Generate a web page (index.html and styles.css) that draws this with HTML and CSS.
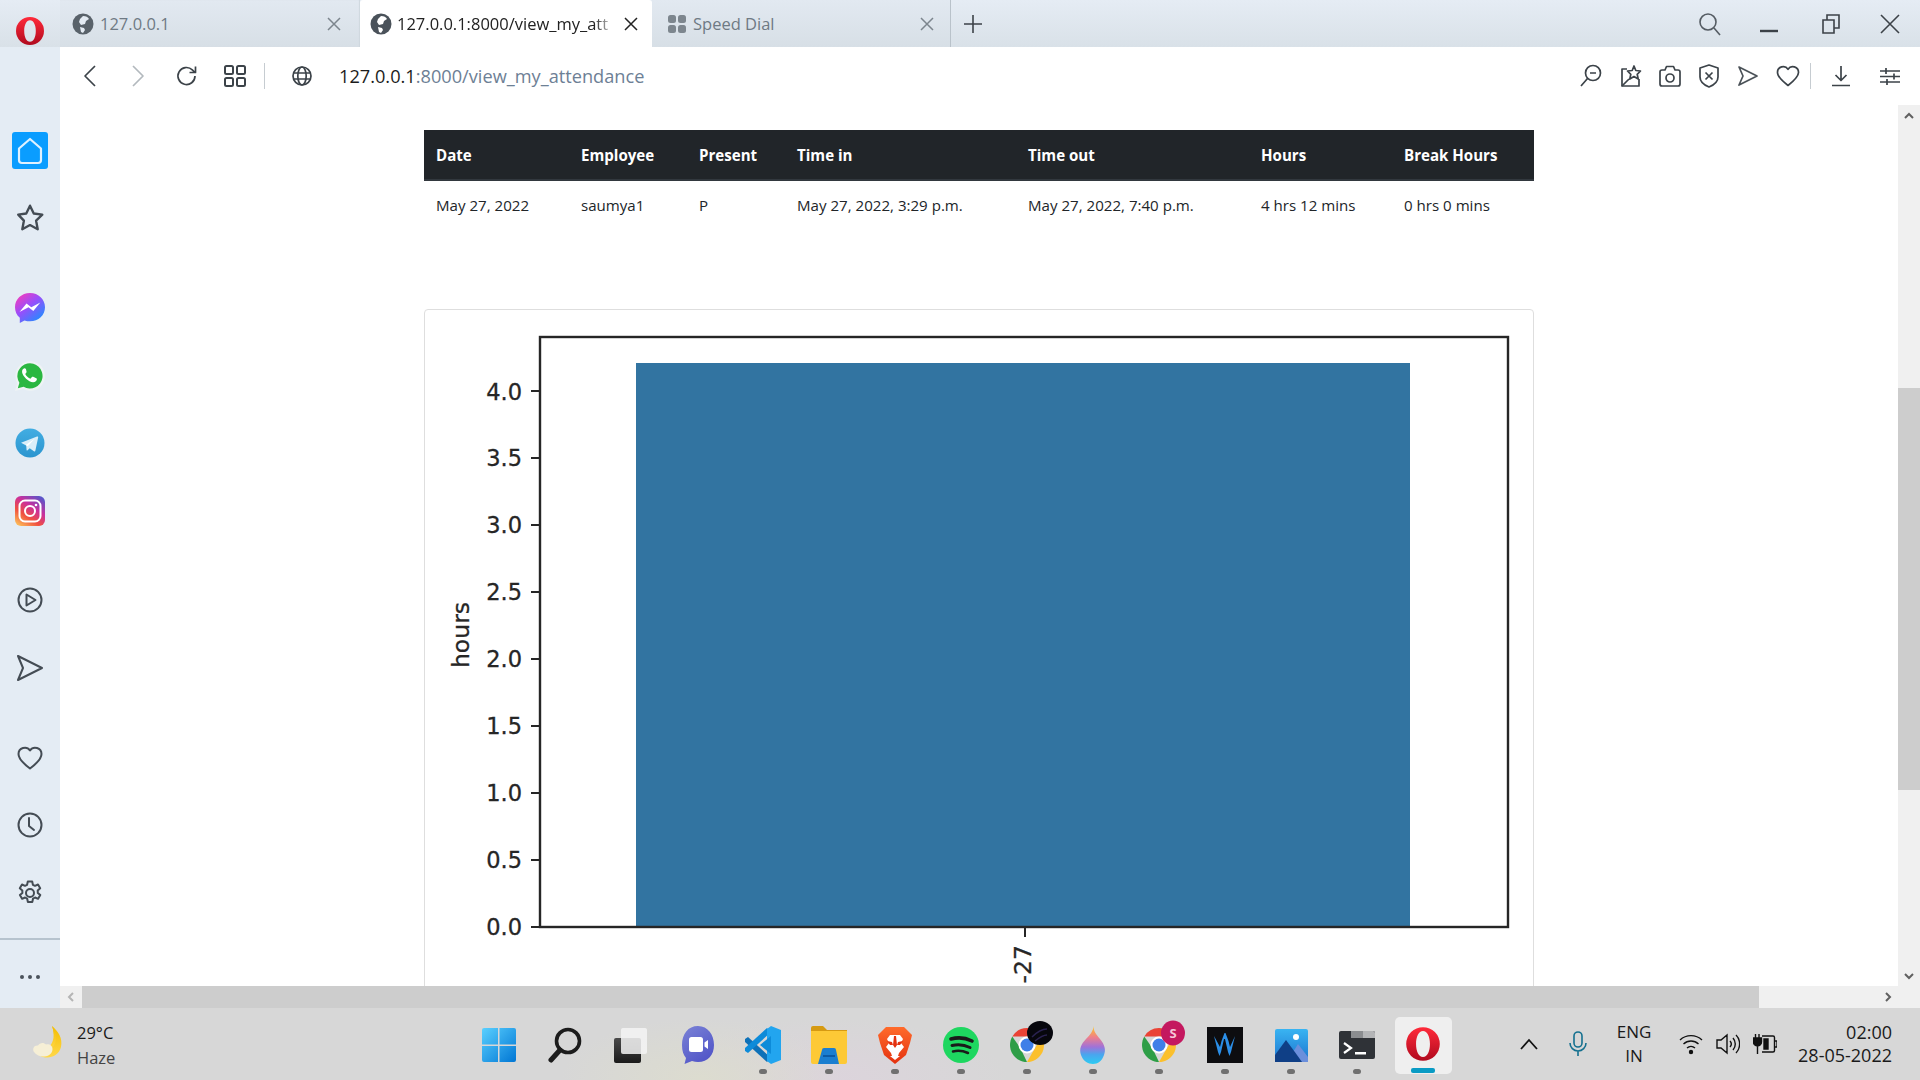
FILE: index.html

```html
<!DOCTYPE html>
<html lang="en">
<head>
    <meta charset="UTF-8">
    <meta name="viewport" content="width=device-width, initial-scale=1.0">
    <title>127.0.0.1:8000/view_my_attendance</title>
    <link rel="stylesheet" href="styles.css">
</head>
<body>

<!-- tab strip -->
<header class="tabbar">
  <div class="logo-slot">
    <svg width="30" height="30" viewBox="0 0 30 30"><defs><linearGradient id="opA" x1="0" y1="0" x2="0" y2="1"><stop offset="0" stop-color="#ff2a3a"/><stop offset="1" stop-color="#b00a1e"/></linearGradient></defs><path fill="url(#opA)" fill-rule="evenodd" d="M15 1a14 14 0 1 0 0 28a14 14 0 1 0 0-28zM15 4.200c-3.600 0-5.800 4.800-5.800 10.800s2.200 10.800 5.800 10.800 5.800-4.800 5.800-10.800-2.200-10.800-5.800-10.800z"/></svg>
  </div>
  <div class="tab tab-one">
    <svg class="favicon" width="22" height="22" viewBox="0 0 22 22"><circle cx="11" cy="11" r="10.500" fill="#59626a"/><path fill="#e4ebf3" d="M11 3c3 0 5 1 6 3l-3 2-1 3-4 1-2-3 1-3zM8 14l4 1 1 2-2 3-2-1z"/></svg>
    <span class="tab-title">127.0.0.1</span>
    <svg class="tab-close" width="14" height="14" viewBox="0 0 14 14"><path d="M1 1l12 12M13 1L1 13"/></svg>
  </div>
  <div class="tab tab-active">
    <svg class="favicon" width="22" height="22" viewBox="0 0 22 22"><circle cx="11" cy="11" r="10.500" fill="#4a525a"/><path fill="#fff" d="M11 3c3 0 5 1 6 3l-3 2-1 3-4 1-2-3 1-3zM8 14l4 1 1 2-2 3-2-1z"/></svg>
    <span class="tab-title">127.0.0.1:8000/view_my_att</span>
    <svg class="tab-close" width="14" height="14" viewBox="0 0 14 14"><path d="M1 1l12 12M13 1L1 13"/></svg>
  </div>
  <div class="tab tab-three">
    <svg class="favicon" width="18" height="18" viewBox="0 0 18 18" fill="#7d868e"><rect x="0" y="0" width="8" height="8" rx="2.500"/><rect x="10" y="0" width="8" height="8" rx="2.500"/><rect x="0" y="10" width="8" height="8" rx="2.500"/><rect x="10" y="10" width="8" height="8" rx="2.500"/></svg>
    <span class="tab-title">Speed Dial</span>
    <svg class="tab-close" width="14" height="14" viewBox="0 0 14 14"><path d="M1 1l12 12M13 1L1 13"/></svg>
  </div>
  <div class="new-tab">
    <svg class="ico-thin" width="20" height="20" viewBox="0 0 20 20"><path d="M10 1v18M1 10h18"/></svg>
  </div>
  <div class="win-buttons">
    <svg class="ico-thin win-search" width="24" height="24" viewBox="0 0 24 24"><circle cx="10" cy="10" r="8"/><path d="M16 16l6 7"/></svg>
    <svg class="ico-thin win-min" width="18" height="18" viewBox="0 0 18 18"><path class="bold" d="M0 16h18"/></svg>
    <svg class="ico-thin win-max" width="18" height="20" viewBox="0 0 18 20"><path d="M1 6h11v13H1zM5 6V1h12v13h-5"/></svg>
    <svg class="ico-thin win-close" width="20" height="20" viewBox="0 0 20 20"><path d="M1 1l18 18M19 1L1 19"/></svg>
  </div>
</header>

<div class="window">
  <!-- opera sidebar -->
  <aside class="sidebar">
    <div class="side-item">
      <div class="home-box">
        <svg width="26" height="28" viewBox="0 0 26 28" fill="none" stroke="#dff1ff" stroke-width="2.200" stroke-linejoin="round"><path d="M13 2L2 11.500V23a3 3 0 0 0 3 3h16a3 3 0 0 0 3-3V11.500z"/></svg>
      </div>
    </div>
    <div class="side-item">
      <svg class="side-ico side-star" width="30" height="30" viewBox="0 0 28 28"><path d="M14 2.500l3.500 7.300 8 1.100-5.800 5.600 1.500 8-7.200-3.900-7.200 3.900 1.500-8L3 10.900l7.500-1.100z"/></svg>
    </div>

    <div class="side-group">
      <div class="side-item">
        <svg width="30" height="30" viewBox="0 0 30 30"><defs><linearGradient id="msG" x1="0.150" y1="0.100" x2="0.850" y2="0.950"><stop offset="0" stop-color="#e83fc4"/><stop offset="0.400" stop-color="#9a4dfb"/><stop offset="1" stop-color="#1a90ff"/></linearGradient></defs><path fill="url(#msG)" d="M15 0C6.500 0 0 6.200 0 14.200c0 4.300 1.800 8 4.800 10.500V30l4.700-2.600c1.700.5 3.600.9 5.500.9 8.500 0 15-6.200 15-14.100S23.500 0 15 0z"/><path fill="#fff" d="M4.500 19l7-8.500 4.800 3.800 9-4.800-7 8.500-4.800-3.800z"/></svg>
      </div>
      <div class="side-item">
        <svg width="30" height="30" viewBox="0 0 30 30"><path fill="#eef3f4" d="M0 30l2.200-7.800A14.800 14.800 0 1 1 8 28z"/><path fill="#2bb741" d="M2.800 27.200l1.600-5.400a12.600 12.600 0 1 1 4.200 4z"/><path fill="#fff" d="M11 8.200c-.5-.9-1-1-1.500-.9-1.500.3-2.700 1.800-2.400 4 .5 3.800 6.400 10 11 10 2.200 0 3.800-1.500 3.800-3 0-.6-.2-.8-.7-1l-3-1.500c-.6-.3-1-.2-1.300.3l-1 1.200c-.3.400-.6.400-1 .2-1.800-.8-3.400-2.300-4.400-4-.2-.4-.2-.6.100-1l.8-1c.3-.3.3-.6.100-1z"/></svg>
      </div>
      <div class="side-item">
        <svg width="30" height="30" viewBox="0 0 30 30"><defs><linearGradient id="tgG" x1="0" y1="0" x2="0" y2="1"><stop offset="0" stop-color="#42ade2"/><stop offset="1" stop-color="#2b95cf"/></linearGradient></defs><circle cx="15" cy="15" r="14.500" fill="url(#tgG)"/><path fill="#d9eef9" d="M6 14.800l16-6.300c.8-.3 1.400.2 1.100 1.300l-2.700 12.800c-.2.900-.8 1.100-1.500.7l-4.200-3.100-2.100 2c-.4.400-.7.500-1 .1l-.4-4.700z"/><path fill="#fff" d="M10.700 17l9.300-6.600-7.300 7.900z"/></svg>
      </div>
      <div class="side-item">
        <svg width="30" height="30" viewBox="0 0 30 30"><defs><linearGradient id="igG" x1="0.100" y1="1" x2="0.800" y2="0"><stop offset="0" stop-color="#fdc25a"/><stop offset="0.350" stop-color="#f0513f"/><stop offset="0.650" stop-color="#cb2f9b"/><stop offset="1" stop-color="#5a55c9"/></linearGradient></defs><rect width="30" height="30" rx="6" fill="url(#igG)"/><rect x="4.500" y="4.500" width="21" height="21" rx="5.500" fill="none" stroke="#fff" stroke-width="2"/><circle cx="15" cy="15" r="5" fill="none" stroke="#fff" stroke-width="2"/><circle cx="21" cy="9" r="1.300" fill="#fff"/></svg>
      </div>
    </div>

    <div class="side-group">
      <div class="side-item">
        <svg class="side-ico" width="26" height="26" viewBox="0 0 26 26"><circle cx="13" cy="13" r="11.500"/><path d="M9.500 7.500v11l9-5.500z"/></svg>
      </div>
      <div class="side-item">
        <svg class="side-ico" width="28" height="28" viewBox="0 0 28 28"><path d="M2 2l24 12-24 12 5-12z"/></svg>
      </div>
    </div>

    <div class="side-group">
      <div class="side-item">
        <svg class="side-ico" width="26" height="24" viewBox="0 0 26 24"><path d="M13 22.500C5 16.500 1.500 12.500 1.500 8A6.300 6.300 0 0 1 13 4.500 6.300 6.300 0 0 1 24.500 8c0 4.500-3.500 8.500-11.500 14.500z"/></svg>
      </div>
      <div class="side-item">
        <svg class="side-ico" width="26" height="26" viewBox="0 0 26 26"><circle cx="13" cy="13" r="11.500"/><path d="M12 6v8l5 4"/></svg>
      </div>
      <div class="side-item">
        <svg class="side-ico" width="26" height="26" viewBox="0 0 26 26"><circle cx="13" cy="13" r="4"/><path d="M10.800 1.500h4.400l.7 3.300 2.100 1 3-1.300 2.200 3.700-2.500 2.200.1 2.500 2.500 2.200-2.200 3.700-3-1.300-2.100 1.200-.7 3.300h-4.400l-.7-3.300-2.100-1.200-3 1.300-2.200-3.700 2.500-2.200-.1-2.500-2.500-2.200 2.200-3.700 3 1.300 2.100-1z"/></svg>
      </div>
    </div>

    <div class="side-more">
      <span class="more-dot"></span><span class="more-dot"></span><span class="more-dot"></span>
    </div>
  </aside>

  <div class="browser">
    <!-- address bar -->
    <nav class="navbar">
      <svg class="nav-ico nav-back" width="14" height="24" viewBox="0 0 14 24"><path d="M12 2L2 12l10 10"/></svg>
      <svg class="nav-ico nav-forward" width="14" height="24" viewBox="0 0 14 24"><path d="M2 2l10 10L2 22"/></svg>
      <svg class="nav-ico nav-reload" width="22" height="22" viewBox="0 0 22 22"><path d="M19 11a8.500 8.500 0 1 1-2.700-6.200L19 7.500M19.500 1.500v6h-6"/></svg>
      <svg class="nav-ico nav-tabs" width="22" height="22" viewBox="0 0 22 22"><rect x="1" y="1" width="8" height="8" rx="1.500"/><rect x="13" y="1" width="8" height="8" rx="1.500"/><rect x="1" y="13" width="8" height="8" rx="1.500"/><rect x="13" y="13" width="8" height="8" rx="1.500"/></svg>
      <span class="nav-sep nav-sep-left"></span>
      <svg class="nav-ico nav-globe" width="20" height="20" viewBox="0 0 20 20"><circle cx="10" cy="10" r="9"/><ellipse cx="10" cy="10" rx="4.200" ry="9"/><path d="M1.500 7h17M1.500 13h17"/></svg>
      <span class="url">127.0.0.1<span class="url-path">:8000/view_my_attendance</span></span>
      <div class="nav-tools">
        <svg class="nav-ico" width="24" height="24" viewBox="0 0 24 24"><circle cx="14" cy="9" r="7.500"/><path d="M11 9h6M8.500 14.500L2 22"/></svg>
        <svg class="nav-ico" width="22" height="22" viewBox="0 0 22 22"><path d="M7 4H2v17h17v-7"/><path d="M14 1l1.800 4.500L20.500 6l-3.300 3.300 1 4.700-4.200-2.500L9.800 14l1-4.700L7.500 6l4.700-.5zM2 21l7-7"/></svg>
        <svg class="nav-ico" width="22" height="22" viewBox="0 0 22 22"><path d="M6 5l1.500-3.500h7L16 5h3a2 2 0 0 1 2 2v12a2 2 0 0 1-2 2H3a2 2 0 0 1-2-2V7a2 2 0 0 1 2-2z"/><circle cx="11" cy="13" r="4"/></svg>
        <svg class="nav-ico" width="22" height="24" viewBox="0 0 22 24"><path d="M11 1l9 3v9c0 5-4 8-9 10C6 21 2 18 2 13V4z"/><path d="M7.500 8.500l7 7M14.500 8.500l-7 7"/></svg>
        <svg class="nav-ico nav-send" width="22" height="22" viewBox="0 0 22 22"><path d="M2 2l18 9-18 9 4-9z"/></svg>
        <svg class="nav-ico" width="24" height="22" viewBox="0 0 24 22"><path d="M12 20.500C5 15 1.500 11.500 1.500 7.500A5.700 5.700 0 0 1 12 4.300a5.700 5.700 0 0 1 10.500 3.200c0 4-3.500 7.500-10.500 13z"/></svg>
        <span class="nav-sep nav-sep-right"></span>
        <svg class="nav-ico nav-down" width="22" height="22" viewBox="0 0 22 22"><path d="M11 1v14M5.500 10l5.500 5.500 5.500-5.500M2 20.500h18"/></svg>
        <svg class="nav-ico nav-setup" width="20" height="20" viewBox="0 0 20 20"><path d="M0 5h20M0 10.500h20M0 16h20M6 2v6M14 7.500v6M7 13v6"/></svg>
      </div>
    </nav>

    <div class="viewport">
      <main class="page">
        <div class="container">
          <table class="attendance">
            <thead>
              <tr>
                <th class="c-date">Date</th>
                <th class="c-emp">Employee</th>
                <th class="c-present">Present</th>
                <th class="c-in">Time in</th>
                <th class="c-out">Time out</th>
                <th class="c-hours">Hours</th>
                <th class="c-break">Break Hours</th>
              </tr>
            </thead>
            <tbody>
              <tr>
                <td>May 27, 2022</td>
                <td>saumya1</td>
                <td>P</td>
                <td>May 27, 2022, 3:29 p.m.</td>
                <td>May 27, 2022, 7:40 p.m.</td>
                <td>4 hrs 12 mins</td>
                <td>0 hrs 0 mins</td>
              </tr>
            </tbody>
          </table>

          <div class="chart-card">
            <svg class="chart" width="1108" height="700" viewBox="0 0 1108 700">
              <rect class="bar" x="211" y="53" width="774" height="564"/>
              <rect class="frame" x="115" y="27" width="968" height="590"/>
              <path class="tick" d="M106 617h9M106 550h9M106 483h9M106 416h9M106 349h9M106 282h9M106 215h9M106 148h9M106 81h9M600 617v10"/>
              <text class="tick-label" x="97" y="625">0.0</text>
              <text class="tick-label" x="97" y="558">0.5</text>
              <text class="tick-label" x="97" y="491">1.0</text>
              <text class="tick-label" x="97" y="424">1.5</text>
              <text class="tick-label" x="97" y="357">2.0</text>
              <text class="tick-label" x="97" y="290">2.5</text>
              <text class="tick-label" x="97" y="223">3.0</text>
              <text class="tick-label" x="97" y="156">3.5</text>
              <text class="tick-label" x="97" y="90">4.0</text>
              <text class="axis-label" transform="translate(44 325) rotate(-90)">hours</text>
              <text class="x-label" transform="translate(606 635) rotate(-90)">-27</text>
            </svg>
          </div>
        </div>
      </main>
      <div class="vscroll">
        <svg class="arrow" width="10" height="8" viewBox="0 0 10 8"><path d="M1 6l4-4 4 4"/></svg>
        <div class="vthumb"></div>
        <svg class="arrow arrow-end" width="10" height="8" viewBox="0 0 10 8"><path d="M1 2l4 4 4-4"/></svg>
      </div>
    </div>

    <div class="hscroll">
      <div class="hcap">
        <svg class="arrow arrow-faint" width="8" height="10" viewBox="0 0 8 10"><path d="M6 1L2 5l4 4"/></svg>
      </div>
      <div class="hthumb"></div>
      <div class="hrest">
        <svg class="arrow" width="8" height="10" viewBox="0 0 8 10"><path d="M2 1l4 4-4 4"/></svg>
      </div>
    </div>
  </div>
</div>

<!-- windows taskbar -->
<footer class="taskbar">
  <div class="weather">
    <svg width="36" height="38" viewBox="0 0 36 38"><defs><linearGradient id="moon" x1="0" y1="0" x2="0" y2="1"><stop offset="0" stop-color="#f4bd00"/><stop offset="1" stop-color="#ffd84a"/></linearGradient></defs><path fill="url(#moon)" d="M21 1c6 5 11 12 9 21-2 8-10 12-18 10-2-.5-4-1.500-5-3 8 1 14-3 15.500-10.500C23.500 13 23 6 21 1z"/><path fill="url(#moon)" d="M21 1c3 8 2 16-3 21l-8 3c7 2 13-2 14.500-8C25.500 11 24 5 21 1z"/><path fill="#f6efd6" d="M3 27c-2-3 0-7 4-6.500 1.500-3 6-3.500 8-1 3-1 6.500 1 6.500 4.500 0 4-3 7-8 7.500-4.500.5-8.500-1.500-10.500-4.500z"/></svg>
    <div class="weather-text">
      <div class="temp">29°C</div>
      <div class="cond">Haze</div>
    </div>
  </div>

  <div class="task-icons">
    <div class="task">
      <svg width="36" height="36" viewBox="0 0 36 36"><defs><linearGradient id="winG" x1="0" y1="0" x2="1" y2="1"><stop offset="0" stop-color="#5ad0ff"/><stop offset="1" stop-color="#0076d4"/></linearGradient></defs><path fill="url(#winG)" d="M1 3a2 2 0 0 1 2-2h14v16.500H1zM18.500 1H33a2 2 0 0 1 2 2v14.500H18.500zM1 19h16v16H3a2 2 0 0 1-2-2zM18.500 19H35v14a2 2 0 0 1-2 2H18.500z"/></svg>
    </div>
    <div class="task">
      <svg width="36" height="36" viewBox="0 0 36 36" fill="none" stroke="#1c1c1c"><circle cx="21" cy="14" r="11.500" stroke-width="3.600"/><path d="M13 23L4 33" stroke-width="5" stroke-linecap="round"/></svg>
    </div>
    <div class="task">
      <svg width="36" height="36" viewBox="0 0 36 36"><defs><linearGradient id="tvG" x1="0" y1="0" x2="0" y2="1"><stop offset="0" stop-color="#4a4a4a"/><stop offset="1" stop-color="#1a1a1a"/></linearGradient></defs><rect x="1" y="11" width="27" height="25" rx="2" fill="url(#tvG)"/><rect x="8" y="1" width="26" height="26" rx="2" fill="#f4f4f4" fill-opacity="0.850"/></svg>
    </div>
    <div class="task">
      <svg class="task-chat" width="36" height="40" viewBox="0 0 36 40"><defs><linearGradient id="chG" x1="0" y1="0" x2="0.600" y2="1"><stop offset="0" stop-color="#7b83d6"/><stop offset="1" stop-color="#5256c8"/></linearGradient></defs><path fill="url(#chG)" d="M18 1C8 1 2 9 2 20c0 6 1.500 10 4 13l-1.500 6 7.500-3c2 .7 4 1 6 1 10 0 16-7 16-17S28 1 18 1z"/><rect x="9" y="12" width="14" height="15" rx="2.500" fill="#fff"/><path fill="#fff" d="M24.500 17.500l3.500-2.500v9l-3.500-2.500z"/></svg>
    </div>
    <div class="task task-open">
      <svg width="38" height="38" viewBox="0 0 38 38"><path fill="#0e71b8" d="M1 13l3-2 23 21-4 4-22-20z"/><path fill="#0d8bd9" d="M1 25l3 2L27 6l-4-4L1 22z"/><path fill="#22a5ef" d="M27 0l10 4v30l-10 4-4-3V3z"/><path fill="#0d8bd9" d="M27 10L16 19l11 9z"/></svg>
      <span class="task-dot"></span>
    </div>
    <div class="task task-open">
      <svg width="36" height="38" viewBox="0 0 36 38"><path fill="#d69a12" d="M0 2a2 2 0 0 1 2-2h10l4 4h20v10H0z"/><path fill="#fdc936" d="M0 5h36v31a2 2 0 0 1-2 2H2a2 2 0 0 1-2-2z"/><path fill="#1b7ed0" d="M11 24a2 2 0 0 1 2-2h10a2 2 0 0 1 2 2l3 14H7z"/><path fill="#0c5ba6" d="M12 29h12v2H12z"/></svg>
      <span class="task-dot"></span>
    </div>
    <div class="task task-open">
      <svg width="34" height="38" viewBox="0 0 34 38"><defs><linearGradient id="brG" x1="0" y1="0" x2="0" y2="1"><stop offset="0" stop-color="#ff6b2b"/><stop offset="1" stop-color="#e4310f"/></linearGradient></defs><path fill="url(#brG)" d="M8 1h18l5 5 3 3-2 8-4 12-11 9-11-9-4-12-2-8 3-3z"/><path fill="#fff" d="M12 9h10l3 4-2 4 3 4-5 6-1 3h2l-5 4-5-4h2l-1-3-5-6 3-4-2-4z"/><path fill="#e4310f" d="M9 15l5 1 1 3-3 0zM25 15l-5 1-1 3 3 0zM16 10h2l1 9-2 3-2-3z"/></svg>
      <span class="task-dot"></span>
    </div>
    <div class="task task-open">
      <svg width="36" height="36" viewBox="0 0 36 36" fill="none" stroke="#1a1a1a" stroke-linecap="round"><circle cx="18" cy="18" r="18" fill="#1ed760" stroke="none"/><path d="M8 12c7-2 14-1.500 21 2" stroke-width="3.600"/><path d="M9 18.500c6-1.500 12-1 18 2" stroke-width="3"/><path d="M10 24.500c5-1.200 10-.7 15 1.500" stroke-width="2.500"/></svg>
      <span class="task-dot"></span>
    </div>
    <div class="task task-open">
      <svg class="over" width="52" height="52" viewBox="0 0 52 52"><path fill="#ea4335" d="M26 9a17 17 0 0 1 14.700 8.500H11.300A17 17 0 0 1 26 9z"/><path fill="#fbc02d" d="M40.700 17.500A17 17 0 0 1 26 43l8-14z"/><path fill="#2e9e47" d="M26 43a17 17 0 0 1-14.700-25.500l8 11.500z"/><circle cx="26" cy="26" r="8.500" fill="#fff"/><circle cx="26" cy="26" r="6.500" fill="#3f7fe8"/><ellipse cx="39" cy="14" rx="13" ry="12" fill="#07070d"/><path d="M31 18c6-6 10-8 15-8M34 22c5-4 9-6 12-6" stroke="#2a2250" stroke-width="1.500" fill="none"/></svg>
      <span class="task-dot"></span>
    </div>
    <div class="task task-open">
      <svg width="30" height="38" viewBox="0 0 30 38"><defs><linearGradient id="flG" x1="0" y1="0" x2="0" y2="1"><stop offset="0" stop-color="#ffc91f"/><stop offset="0.300" stop-color="#ee7f8c"/><stop offset="0.550" stop-color="#a072d8"/><stop offset="0.750" stop-color="#4aa5ee"/><stop offset="1" stop-color="#2ccbf2"/></linearGradient></defs><path fill="url(#flG)" d="M16 0c-1 5 2 8 6 13 5 6 6 11 4 16-2 6-6 9-11 9S5 35 3 29C1 23 3 18 8 13c4-4 7-8 8-13z"/></svg>
      <span class="task-dot"></span>
    </div>
    <div class="task task-open">
      <svg class="over" width="52" height="52" viewBox="0 0 52 52"><path fill="#ea4335" d="M26 9a17 17 0 0 1 14.700 8.500H11.300A17 17 0 0 1 26 9z"/><path fill="#fbc02d" d="M40.700 17.500A17 17 0 0 1 26 43l8-14z"/><path fill="#2e9e47" d="M26 43a17 17 0 0 1-14.700-25.500l8 11.500z"/><circle cx="26" cy="26" r="8.500" fill="#fff"/><circle cx="26" cy="26" r="6.500" fill="#3f7fe8"/><ellipse cx="40" cy="14" rx="12" ry="12.500" fill="#c4185f"/><text class="badge-s" x="40" y="19">S</text></svg>
      <span class="task-dot"></span>
    </div>
    <div class="task task-open">
      <svg width="36" height="36" viewBox="0 0 36 36"><rect width="36" height="36" fill="#0d0d10"/><path d="M7 9l4 16 1.500 4 1.500-4 3-13 1 0 3 13 1.500 4 1.500-4 4-16-5 11-1.500-6-3-8h-1l-3 8-1.500 6z" fill="#2b8fe8"/></svg>
      <span class="task-dot"></span>
    </div>
    <div class="task task-open">
      <svg width="33" height="33" viewBox="0 0 33 33"><defs><linearGradient id="phG" x1="0" y1="0" x2="0" y2="1"><stop offset="0" stop-color="#39b4f2"/><stop offset="1" stop-color="#1d74cf"/></linearGradient></defs><rect width="33" height="33" rx="2" fill="url(#phG)"/><path fill="#6b8fdc" d="M12 33L23 15l10 13v5z"/><path fill="#0f3f86" d="M0 33V26L11 11l11 15 5 7z"/><circle cx="21" cy="8" r="3" fill="#fff"/></svg>
      <span class="task-dot"></span>
    </div>
    <div class="task task-open">
      <svg width="36" height="28" viewBox="0 0 36 28"><rect width="36" height="28" rx="2" fill="#2f3237"/><path fill="#8b8d90" d="M12 0h12v7H12z"/><path fill="#b4b5b7" d="M24 0h10a2 2 0 0 1 2 2v5H24z"/><path d="M5 12l7 5-7 5" stroke="#fff" stroke-width="2.200" fill="none"/><path fill="#fff" d="M16 21h11v2.500H16z"/></svg>
      <span class="task-dot"></span>
    </div>
    <div class="task">
      <div class="task-active">
        <svg width="36" height="36" viewBox="0 0 30 30"><defs><linearGradient id="opB" x1="0" y1="0" x2="0" y2="1"><stop offset="0" stop-color="#ff2a3a"/><stop offset="1" stop-color="#b00a1e"/></linearGradient></defs><path fill="url(#opB)" fill-rule="evenodd" d="M15 1a14 14 0 1 0 0 28a14 14 0 1 0 0-28zM15 4.200c-3.600 0-5.800 4.800-5.800 10.800s2.200 10.800 5.800 10.800 5.800-4.800 5.800-10.800-2.200-10.800-5.800-10.800z"/></svg>
      </div>
    </div>
  </div>

  <div class="tray">
    <svg class="tray-ico tray-chevron" width="18" height="12" viewBox="0 0 18 12"><path d="M1 11L9 2l8 9"/></svg>
    <svg class="tray-ico tray-mic" width="18" height="26" viewBox="0 0 18 26"><rect x="5" y="1" width="8" height="15" rx="4"/><path d="M1 12a8 8 0 0 0 16 0M9 20v5"/></svg>
    <div class="tray-lang"><div>ENG</div><div>IN</div></div>
    <svg class="tray-ico tray-wifi" width="24" height="22" viewBox="0 0 24 22"><path d="M1 7a16 16 0 0 1 22 0M4.500 11a11 11 0 0 1 15 0M8 15a6 6 0 0 1 8 0"/><circle cx="12" cy="19" r="1.500" fill="#111"/></svg>
    <svg class="tray-ico tray-vol" width="24" height="22" viewBox="0 0 24 22"><path d="M1 7h4l6-5v18l-6-5H1zM14 8a4.500 4.500 0 0 1 0 6M17 5a9 9 0 0 1 0 12M20 2a13 13 0 0 1 0 18"/></svg>
    <svg class="tray-ico tray-batt" width="24" height="22" viewBox="0 0 24 22"><path d="M9 3h11a1.500 1.500 0 0 1 1.500 1.500v13A1.500 1.500 0 0 1 20 19H9M21.500 8H24v6h-2.500"/><path class="batt-fill" d="M2.500 1v4M6 1v4M0.500 5h8v4a4 4 0 0 1-8 0zM4.500 13v8M11 6h4v10h-4z"/></svg>
    <div class="clock"><div>02:00</div><div>28-05-2022</div></div>
  </div>
</footer>

</body>
</html>
```

FILE: styles.css

```css
* {
    box-sizing: border-box;
}
html, body {
    height: 100%;
}
body {
    margin: 0;
    height: 1080px;
    overflow: hidden;
    display: flex;
    flex-direction: column;
    font-family: "Open Sans", "Liberation Sans", sans-serif;
    background-color: #e4ecf4;
    color: #212529;
}
svg {
    display: block;
    flex: none;
}

/* tab strip */
.tabbar {
    height: 47px;
    flex: none;
    display: flex;
    align-items: stretch;
    background: linear-gradient(#e5ecf4, #d9e1e8);
}
.logo-slot {
    width: 60px;
    display: flex;
    align-items: center;
    justify-content: center;
    padding-top: 14px;
    height: 47px;
}
.tab {
    display: flex;
    align-items: center;
    font-size: 16.5px;
    color: #6f7a84;
}
.tab-one {
    width: 300px;
    padding-left: 12px;
    background: linear-gradient(#e2e9f1, #d7dfe6);
    box-shadow: inset -1px 0 1px #cfd7de;
}
.tab-active {
    width: 292px;
    padding-left: 10px;
    background-color: #fff;
    color: #222;
    border-radius: 3px 3px 0 0;
}
.tab-three {
    width: 299px;
    padding-left: 16px;
    border-right: 1px solid #b9c2ca;
    background: linear-gradient(#e2e9f1, #d7dfe6);
}
.tab-title {
    margin-left: 6px;
    flex: 1;
    min-width: 0;
    white-space: nowrap;
}
.tab-active .tab-title {
    margin-left: 5px;
    mask-image: linear-gradient(to right, #000 90%, transparent);
}
.tab-three .tab-title {
    margin-left: 7px;
}
.tab-close {
    fill: none;
    stroke: #7c858d;
    stroke-width: 1.5;
    margin-left: 10px;
    margin-right: 19px;
}
.tab-active .tab-close {
    stroke: #222;
    margin-left: 8px;
    margin-right: 14px;
}
.tab-three .tab-close {
    margin-right: 16px;
}
.new-tab {
    width: 44px;
    display: flex;
    align-items: center;
    justify-content: center;
}
.ico-thin {
    fill: none;
    stroke: #3c4248;
    stroke-width: 1.6;
}
.win-buttons {
    flex: 1;
    display: flex;
    align-items: center;
    justify-content: flex-end;
    padding-right: 20px;
}
.win-search {
    margin-right: 38px;
    stroke: #555c63;
}
.win-min {
    margin-right: 44px;
}
.win-min .bold {
    stroke-width: 2.4;
}
.win-max {
    margin-right: 40px;
}

/* sidebar */
.window {
    flex: 1;
    min-height: 0;
    display: flex;
}
.sidebar {
    width: 60px;
    flex: none;
    display: flex;
    flex-direction: column;
    padding-top: 70px;
    background-color: #e4ecf4;
}
.side-item {
    height: 67.6px;
    display: flex;
    align-items: center;
    justify-content: center;
}
.side-group {
    margin-top: 22px;
}
.side-ico {
    fill: none;
    stroke: #444c54;
    stroke-width: 2;
    stroke-linejoin: round;
    stroke-linecap: round;
}
.side-star {
    stroke-width: 2.2;
}
.home-box {
    width: 36px;
    height: 37px;
    display: flex;
    align-items: center;
    justify-content: center;
    background-color: #0a9dff;
    border-radius: 3px;
}
.side-more {
    margin-top: 11px;
    height: 70px;
    padding-top: 7px;
    border-top: 2px solid #b6c3ce;
    display: flex;
    align-items: center;
    justify-content: center;
    gap: 4px;
}
.more-dot {
    width: 4px;
    height: 4px;
    border-radius: 50%;
    background-color: #4a525a;
}

/* address bar */
.browser {
    flex: 1;
    min-width: 0;
    display: flex;
    flex-direction: column;
    background-color: #fff;
}
.navbar {
    height: 58px;
    flex: none;
    display: flex;
    align-items: center;
    padding-bottom: 1px;
}
.nav-ico {
    fill: none;
    stroke: #3c4349;
    stroke-width: 1.7;
    stroke-linejoin: round;
}
.nav-back {
    margin-left: 23px;
}
.nav-forward {
    margin-left: 34px;
    stroke: #b3b9be;
}
.nav-reload {
    margin-left: 31px;
}
.nav-tabs {
    margin-left: 26px;
    stroke-width: 2;
}
.nav-sep {
    width: 1px;
    height: 26px;
    background-color: #c6ccd1;
}
.nav-sep-left {
    margin-left: 18px;
}
.nav-globe {
    margin-left: 27px;
}
.url {
    margin-left: 27px;
    font-size: 18.2px;
    color: #1c1c1c;
    white-space: nowrap;
}
.url-path {
    color: #6d8095;
}
.nav-tools {
    flex: 1;
    display: flex;
    align-items: center;
    justify-content: flex-end;
    gap: 17px;
    padding-right: 20px;
}
.nav-send {
    stroke: #4b5258;
}
.nav-sep-right {
    margin-left: -7px;
}
.nav-down {
    margin-left: 2px;
}
.nav-setup {
    margin-left: 11px;
}

/* page */
.viewport {
    flex: 1;
    min-height: 0;
    display: flex;
}
.page {
    flex: 1;
    min-width: 0;
    overflow: hidden;
    display: flex;
    justify-content: center;
    padding-top: 25px;
}
.container {
    width: 1110px;
    flex: none;
}
.attendance {
    width: 1110px;
    table-layout: fixed;
    border-collapse: collapse;
    font-size: 15.1px;
}
.attendance th {
    height: 50px;
    padding: 0 12px;
    text-align: left;
    font-weight: 700;
    color: #fff;
    background-color: #212529;
    border-bottom: 2px solid #32383e;
}
.attendance td {
    height: 48px;
    padding: 0 12px;
    color: #212529;
}
.c-date { width: 145px; }
.c-emp { width: 118px; }
.c-present { width: 98px; }
.c-in { width: 231px; }
.c-out { width: 233px; }
.c-hours { width: 143px; }
.c-break { width: 142px; }

.chart-card {
    margin-top: 81px;
    height: 800px;
    border: 1px solid #dedede;
    border-radius: 4px;
    background-color: #fff;
}
.bar {
    fill: #3274a1;
}
.frame {
    fill: none;
    stroke: #262626;
    stroke-width: 2.4;
}
.tick {
    fill: none;
    stroke: #262626;
    stroke-width: 2;
}
.tick-label, .axis-label, .x-label {
    font-family: "DejaVu Sans", sans-serif;
    font-size: 22.5px;
    fill: #262626;
    stroke: #262626;
    stroke-width: 0.3;
}
.tick-label, .x-label {
    text-anchor: end;
}
.axis-label {
    text-anchor: middle;
    font-size: 23.5px;
}
.x-label {
    font-size: 23.5px;
}

/* scrollbars */
.vscroll {
    width: 22px;
    flex: none;
    display: flex;
    flex-direction: column;
    align-items: center;
    padding: 7px 0 6px;
    background-color: #f0f0f0;
}
.vthumb {
    width: 22px;
    height: 402px;
    margin-top: 268px;
    background-color: #cdcdcd;
}
.arrow {
    fill: none;
    stroke: #606060;
    stroke-width: 2;
}
.arrow-faint {
    stroke: #b5b5b5;
}
.arrow-end {
    margin-top: auto;
}
.hscroll {
    height: 22px;
    flex: none;
    display: flex;
    background-color: #f0f0f0;
}
.hcap {
    width: 22px;
    display: flex;
    align-items: center;
    justify-content: center;
}
.hthumb {
    width: 1677px;
    background-color: #cdcdcd;
}
.hrest {
    flex: 1;
    display: flex;
    align-items: center;
    justify-content: flex-end;
    padding-right: 28px;
}

/* taskbar */
.taskbar {
    height: 72px;
    flex: none;
    display: flex;
    background:
        radial-gradient(ellipse 140px 60px at 700px 70px, #dcdccf, transparent),
        radial-gradient(ellipse 180px 60px at 830px 70px, #dcd4dc, transparent),
        #d7d7d7;
    color: #1a1a1a;
}
.weather {
    width: 466px;
    flex: none;
    display: flex;
    align-items: center;
    padding-left: 31px;
}
.weather-text {
    margin-left: 10px;
    padding-top: 2px;
    font-size: 16.5px;
    line-height: 25px;
}
.cond {
    color: #444;
}
.task-icons {
    display: flex;
}
.task {
    width: 66px;
    position: relative;
    display: flex;
    justify-content: center;
    align-items: center;
    height: 72px;
    padding-top: 2px;
}
.task-dot {
    position: absolute;
    left: 29px;
    bottom: 6px;
    width: 8px;
    height: 5px;
    border-radius: 3px;
    background-color: #707070;
}
.task-chat {
    margin-left: 2px;
}
.over {
    margin: -8px;
}
.badge-s {
    font-size: 13px;
    font-weight: 700;
    fill: #f5c6d8;
    text-anchor: middle;
}
.task-active {
    width: 57px;
    height: 57px;
    margin-top: 1px;
    position: relative;
    display: flex;
    align-items: center;
    justify-content: center;
    padding-bottom: 4px;
    background-color: #efefef;
    border-radius: 5px;
}
.task-active::after {
    content: "";
    position: absolute;
    left: 16px;
    bottom: 1px;
    width: 24px;
    height: 5px;
    border-radius: 2px;
    background-color: #0a9bc4;
}
.tray {
    flex: 1;
    display: flex;
    align-items: center;
    padding-right: 28px;
}
.tray-ico {
    fill: none;
    stroke: #111;
    stroke-width: 1.4;
}
.tray-chevron {
    margin-left: 64px;
    stroke-width: 1.8;
}
.tray-mic {
    margin-left: 31px;
    stroke: #14708f;
    stroke-width: 1.6;
}
.tray-lang {
    width: 60px;
    margin-left: 17px;
    text-align: center;
    font-size: 17px;
    line-height: 24px;
}
.tray-wifi {
    margin-left: 15px;
}
.tray-vol {
    margin-left: 13px;
}
.tray-batt {
    margin-left: 13px;
}
.batt-fill {
    fill: #111;
}
.clock {
    flex: 1;
    text-align: right;
    font-size: 18px;
    line-height: 23px;
}
```
